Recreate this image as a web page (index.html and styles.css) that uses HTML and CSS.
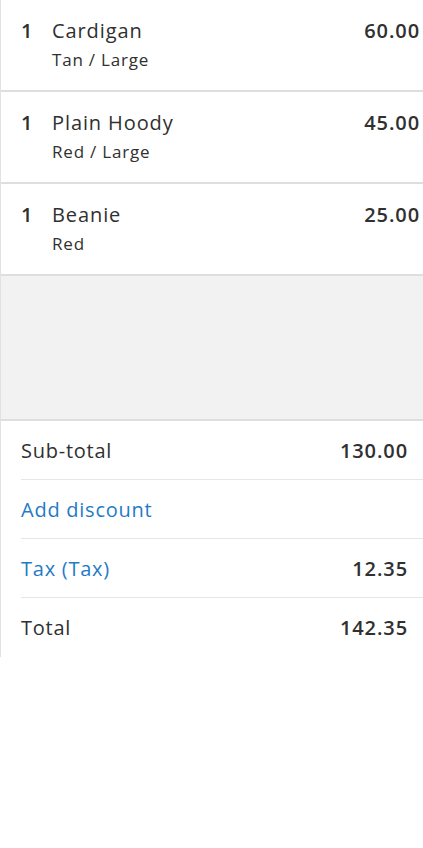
FILE: index.html
```html
<!DOCTYPE html>
<html>
<head>
<meta charset="utf-8">
<link rel="stylesheet" href="styles.css">
</head>
<body>
<div class="panel">
  <ul class="items">
    <li class="item">
      <span class="qty">1</span>
      <div class="info">
        <div class="name">Cardigan</div>
        <div class="variant">Tan / Large</div>
      </div>
      <span class="price">60.00</span>
    </li>
    <li class="item">
      <span class="qty">1</span>
      <div class="info">
        <div class="name">Plain Hoody</div>
        <div class="variant">Red / Large</div>
      </div>
      <span class="price">45.00</span>
    </li>
    <li class="item">
      <span class="qty">1</span>
      <div class="info">
        <div class="name">Beanie</div>
        <div class="variant">Red</div>
      </div>
      <span class="price">25.00</span>
    </li>
  </ul>
  <div class="spacer"></div>
  <div class="summary">
    <div class="row"><span class="label">Sub-total</span><span class="amount">130.00</span></div>
    <div class="row"><span class="label link">Add discount</span></div>
    <div class="row"><span class="label link">Tax (Tax)</span><span class="amount">12.35</span></div>
    <div class="row"><span class="label">Total</span><span class="amount">142.35</span></div>
  </div>
</div>
</body>
</html>
```

FILE: styles.css
```css
* { box-sizing: border-box; }
html, body {
  margin: 0;
  padding: 0;
  background: #fff;
}
body {
  font-family: "Open Sans", "Liberation Sans", sans-serif;
  color: #303030;
  width: 423px;
  height: 848px;
}
.panel {
  border-left: 1px solid #e2e2e2;
  width: 423px;
}
.items {
  list-style: none;
  margin: 0;
  padding: 0;
}
.item {
  display: flex;
  align-items: flex-start;
  height: 92px;
  padding: 16px 3px 0 20px;
  border-bottom: 2px solid #dedede;
}
.qty {
  width: 31px;
  font-size: 20px;
  line-height: 30px;
  font-weight: 600;
}
.info {
  flex: 1;
}
.name {
  font-size: 20px;
  line-height: 30px;
  letter-spacing: 0.9px;
}
.variant {
  font-size: 17px;
  line-height: 28px;
  letter-spacing: 0.8px;
}
.price {
  font-size: 20px;
  line-height: 30px;
  font-weight: 600;
  letter-spacing: 0.9px;
}
.spacer {
  height: 145px;
  background: #f2f2f2;
  border-bottom: 2px solid #dedede;
}
.summary {
  padding-left: 20px;
}
.row {
  display: flex;
  justify-content: space-between;
  align-items: center;
  height: 59px;
  padding-right: 15px;
  border-bottom: 1px solid #e6e6e6;
  font-size: 20px;
  letter-spacing: 0.75px;
}
.row:last-child {
  border-bottom: none;
  height: 59px;
}
.link {
  color: #1f7bc6;
}
.amount {
  font-weight: 600;
  letter-spacing: 0.9px;
}
```
